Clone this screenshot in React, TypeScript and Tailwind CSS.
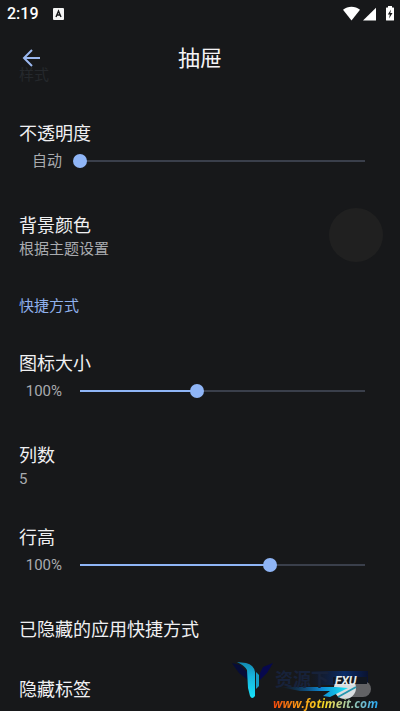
import { useState } from "react";

// Ajustes del cajón de aplicaciones: barra de estado, cabecera y lista.

type SliderRowProps = {
  id: string;
  title: string;
  min: number;
  max: number;
  initial: number;
  autoLabel?: string;
};

function SliderRow({ id, title, min, max, initial, autoLabel }: SliderRowProps) {
  const [value, setValue] = useState(initial);
  const pct = ((value - min) / (max - min)) * 100;
  const label = autoLabel && value === min ? autoLabel : `${value}%`;

  return (
    <div className="pb-0.5">
      <label htmlFor={id} className="block text-lg leading-6 text-[#f0f0f2]">
        {title}
      </label>
      <div className="flex h-[30px] items-center">
        <span className="w-[43px] shrink-0 text-right text-[15px] leading-6 text-[#a9abaf]">{label}</span>
        <input
          id={id}
          type="range"
          min={min}
          max={max}
          value={value}
          onChange={(e) => setValue(Number(e.target.value))}
          className="mx-[11px] h-6 min-w-0 flex-1 appearance-none bg-[length:calc(100%-14px)_2px] bg-center bg-no-repeat outline-none [&::-webkit-slider-thumb]:size-3.5 [&::-webkit-slider-thumb]:appearance-none [&::-webkit-slider-thumb]:rounded-full [&::-webkit-slider-thumb]:bg-[#8fb5f6]"
          style={{
            backgroundImage: `linear-gradient(to right, #8fb5f6 ${pct}%, #3a3f4b ${pct}%)`,
          }}
        />
      </div>
    </div>
  );
}

function TextRow({ title, summary }: { title: string; summary?: string }) {
  return (
    <button type="button" className="block w-full text-left">
      <span className="block text-lg leading-6 text-[#f0f0f2]">{title}</span>
      {summary && <span className="block text-[15px] leading-[22px] text-[#a9abaf]">{summary}</span>}
    </button>
  );
}

function StatusBar() {
  return (
    <div className="flex h-7 items-center justify-between pr-1.5 pl-[7px]">
      <div className="flex items-center gap-3.5">
        <span className="text-base leading-7 font-medium text-white">2:19</span>
        <svg viewBox="0 0 11 12" className="h-3 w-[11px]" aria-hidden="true">
          <rect width="11" height="12" rx="1" fill="#f4f4f4" />
          <path d="M3 9 5.5 3 8 9M4 7h3" fill="none" stroke="#17181a" strokeWidth="1.4" />
        </svg>
      </div>
      <svg viewBox="0 0 52 16" className="h-4 w-[52px]" fill="#fff" aria-hidden="true">
        <path d="M1 3.8C5.8-.3 13.2-.3 18 3.8L9.5 14.4Z" />
        <path d="M34 1.8V14.4H21Z" />
        <path d="M44.5 1.5H46V0h4v1.5h1.5q.5 0 .5.5V14q0 .5-.5.5h-7q-.5 0-.5-.5V2q0-.5.5-.5Z" />
        <path d="M49 3.5 45.8 8.5h2l-.7 4L50.5 7h-2.2Z" fill="#17181a" />
      </svg>
    </div>
  );
}

function Header() {
  return (
    <header className="relative flex h-[62px] items-center justify-center">
      {/* Sección que se desvanece bajo la cabecera */}
      <span className="absolute top-9 left-[19px] text-[15px] leading-[22px] text-[#25282c]">样式</span>
      <button type="button" aria-label="返回" className="absolute top-[18px] left-5 size-6">
        <svg viewBox="0 0 24 24" fill="none" stroke="#9bb8f0" strokeWidth="2" aria-hidden="true">
          <path d="M20 12H4M12 4l-8 8 8 8" />
        </svg>
      </button>
      <h1 className="text-[22px] leading-8 text-[#f4f4f6]">抽屉</h1>
    </header>
  );
}

function Watermark() {
  return (
    <div className="pointer-events-none absolute right-5 bottom-0 h-[54px] w-[150px]">
      <svg viewBox="0 0 150 54" className="absolute inset-0" aria-hidden="true">
        <defs>
          <linearGradient id="beam" x1="0" x2="0" y1="0" y2="1">
            <stop offset="0" stopColor="#1288b0" />
            <stop offset="0.4" stopColor="#18b4dc" />
            <stop offset="1" stopColor="#16e2fa" />
          </linearGradient>
          <linearGradient id="sweep" x1="0" x2="1">
            <stop offset="0" stopColor="#063a78" stopOpacity="0" />
            <stop offset="0.6" stopColor="#0d86d0" />
            <stop offset="1" stopColor="#18e8f8" />
          </linearGradient>
          <linearGradient id="band" x1="0" x2="1">
            <stop offset="0" stopColor="#0a1c48" stopOpacity="0" />
            <stop offset="0.6" stopColor="#0a2c68" />
            <stop offset="1" stopColor="#0a1230" />
          </linearGradient>
        </defs>
        {/* Alas y haz del logotipo */}
        <path d="M2 5 10 7 17 14 18 22 9 15Z" fill="#070d38" />
        <path d="M43 5 33 9 30 15 30 22 37 15Z" fill="#07084e" />
        <path d="M7 4 16 5Q24 7 25 14V38Q22 42 20 38L18 30 17 12Q14 7 7 4Z" fill="url(#beam)" />
        <path d="M26 14 29 17V28L26 31Z" fill="#159cc4" />
        <rect x="78" y="13" width="60" height="14" fill="url(#band)" />
        <rect x="114" y="23" width="27" height="16" rx="8" fill="#626265" />
        <circle cx="115" cy="30" r="11" fill="#d9dde0" />
        <path d="M103 19H137V26H103Z" fill="#11161f" />
        <path d="M50 29H106L118 30 100 39 93 38 100 33H70Z" fill="url(#sweep)" />
        <path d="M126 29 108 39" fill="none" stroke="#2596ae" strokeWidth="2" />
      </svg>
      <span className="absolute top-2.5 left-[45px] text-lg leading-6 font-bold whitespace-nowrap text-[#17223a]">
        资源下
      </span>
      <span className="absolute top-[17px] left-[105px] text-xs leading-3 font-bold text-[#e6ecee] italic">
        FXU
      </span>
      <span className="absolute right-0.5 bottom-0 bg-linear-to-r from-[#f0440c] via-[#f4dc20] to-[#18a8f4] bg-clip-text font-['Open_Sans',sans-serif] text-xs leading-4 font-bold text-transparent italic">
        www.fotimeit.com
      </span>
    </div>
  );
}

export default function App() {
  return (
    <div className="relative min-h-screen bg-[#17181a] font-[Roboto,'Noto_Sans_CJK_SC',sans-serif]">
      <StatusBar />
      <Header />
      <main className="flex flex-col gap-9 pt-8 pr-[17px] pb-2.5 pl-[19px]">
        <SliderRow id="opacity" title="不透明度" min={0} max={100} initial={0} autoLabel="自动" />
        <div className="relative">
          <TextRow title="背景颜色" summary="根据主题设置" />
          <span className="absolute -top-1.5 right-0 size-[54px] rounded-full bg-[#202020]" />
        </div>
        <h2 className="text-[15px] leading-5 text-[#8fb0ec]">快捷方式</h2>
        <SliderRow id="icon-size" title="图标大小" min={30} max={200} initial={100} />
        <TextRow title="列数" summary="5" />
        <SliderRow id="row-height" title="行高" min={50} max={125} initial={100} />
        <TextRow title="已隐藏的应用快捷方式" />
        <TextRow title="隐藏标签" />
      </main>
      <Watermark />
    </div>
  );
}
